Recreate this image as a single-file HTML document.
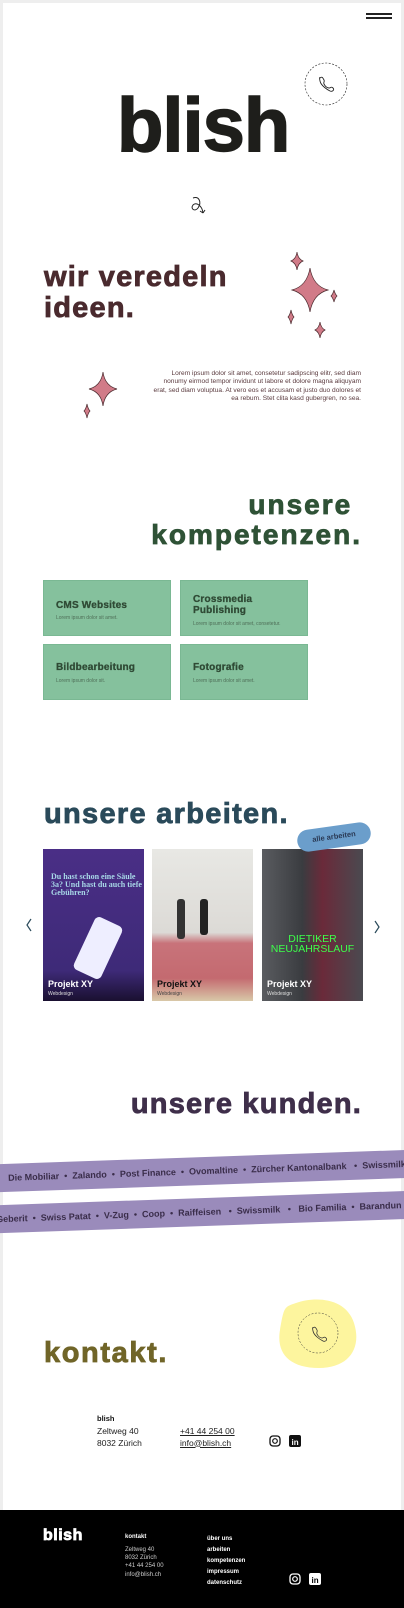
<!DOCTYPE html>
<html><head><meta charset="utf-8">
<style>
*{margin:0;padding:0;box-sizing:border-box}
body{width:404px;height:1608px;position:relative;background:#fff;font-family:"Liberation Sans",sans-serif;overflow:hidden}
.a{position:absolute}
.frame{left:0;top:0;width:404px;height:1510px;border:3px solid #eee;border-bottom:none}
.h{font-weight:bold;line-height:1;-webkit-text-stroke:0.8px currentColor}
.card{background:#85c19d;width:128px;height:56px;border:1px solid #7ab893}
.card b{position:absolute;left:12px;font-size:10px;color:#2f4a35;line-height:11px;-webkit-text-stroke:0.3px #2f4a35;letter-spacing:0.2px}
.card span{position:absolute;left:12px;font-size:5px;color:#4f6f58}
.proj{width:101px;height:152px;overflow:hidden}
.proj b{position:absolute;left:5px;bottom:12px;font-size:9px;color:#fff}
.proj i{position:absolute;left:5px;bottom:4px;font-size:5px;color:#ddd;font-style:normal}
.band{left:-20px;width:450px;height:28px;background:#9a8bbb;font-weight:bold;font-size:9px;color:#3a2d4a;white-space:nowrap;line-height:28px;padding-left:28px}
.f{color:#fff}
</style></head><body>
<div class="a frame"></div>
<div class="a" style="left:366px;top:13px;width:26px;height:2px;background:#222"></div>
<div class="a" style="left:366px;top:17px;width:26px;height:2px;background:#222"></div>
<svg class="a" style="left:300px;top:58px" width="52" height="52" viewBox="0 0 52 52">
<circle cx="26" cy="26" r="21" fill="none" stroke="#222" stroke-width="0.6" stroke-dasharray="2 1.5"/>
<path d="M20 20c2-2 3 0 4 2s-1 2 0 4 3 4 5 4 2-2 4 0-1 4-3 3-9-5-10-10 0-3 0-3z" fill="none" stroke="#222" stroke-width="0.9"/>
</svg>
<div class="a h" style="left:117px;top:88px;font-size:76px;color:#1e1e1b;letter-spacing:-1px;-webkit-text-stroke:1.5px #1e1e1b">blish</div>
<svg class="a" style="left:188px;top:193px" width="24" height="30" viewBox="0 0 24 30">
<path d="M5 5c6-2 9 4 5 10-3 4-8 1-5-3 3-3 9 0 10 8m0 0l-3-2m3 2l2-3" fill="none" stroke="#222" stroke-width="1"/>
</svg>
<div class="a h" style="left:44px;top:262px;font-size:29px;letter-spacing:1.2px;color:#4a2a2e;line-height:31px">wir veredeln<br>ideen.</div>
<svg class="a" style="left:0;top:240px" width="404" height="180" viewBox="0 240 404 180">
<g fill="#d17b88" stroke="#4a2a2e" stroke-width="0.7">
<path d="M310 268q3 18 18 22q-15 4-18 22q-3-18-18-22q15-4 18-22z"/>
<path d="M297 252q1 7 6 9q-5 2-6 9q-1-7-6-9q5-2 6-9z"/>
<path d="M334 290q1 4 3 6q-2 2-3 6q-1-4-3-6q2-2 3-6z"/>
<path d="M291 310q1 5 3 7q-2 2-3 7q-1-5-3-7q2-2 3-7z"/>
<path d="M320 322q1 6 5 8q-4 2-5 8q-1-6-5-8q4-2 5-8z"/>
<path d="M103 372q2 14 14 17q-12 3-14 17q-2-14-14-17q12-3 14-17z"/>
<path d="M87 404q1 5 3 7q-2 2-3 7q-1-5-3-7q2-2 3-7z"/>
</g></svg>
<div class="a" style="left:150px;top:370px;width:211px;text-align:right;font-size:6.6px;line-height:8.4px;color:#5a3a3e">Lorem ipsum dolor sit amet, consetetur sadipscing elitr, sed diam nonumy eirmod tempor invidunt ut labore et dolore magna aliquyam erat, sed diam voluptua. At vero eos et accusam et justo duo dolores et ea rebum. Stet clita kasd gubergren, no sea.</div>
<div class="a h" style="right:42px;top:490px;font-size:28px;letter-spacing:2px;color:#2f5236;text-align:right;line-height:30px">unsere&nbsp;<br>kompetenzen.</div>
<div class="a card" style="left:43px;top:580px"><b style="top:19px">CMS Websites</b><span style="top:34px">Lorem ipsum dolor sit amet.</span></div>
<div class="a card" style="left:180px;top:580px"><b style="top:13px">Crossmedia<br>Publishing</b><span style="top:40px">Lorem ipsum dolor sit amet, consetetur.</span></div>
<div class="a card" style="left:43px;top:644px"><b style="top:17px">Bildbearbeitung</b><span style="top:33px">Lorem ipsum dolor sit.</span></div>
<div class="a card" style="left:180px;top:644px"><b style="top:17px">Fotografie</b><span style="top:33px">Lorem ipsum dolor sit amet.</span></div>
<div class="a h" style="left:44px;top:800px;font-size:29px;letter-spacing:1.3px;color:#2a4a5a">unsere arbeiten.</div>
<div class="a proj" style="left:43px;top:849px;background:linear-gradient(#4a2e86,#3e2a78 80%,#1a1030)">
<div class="a" style="left:8px;top:24px;font-family:'Liberation Serif',serif;font-weight:bold;font-size:8px;line-height:8px;color:#a8d8e8">Du hast schon eine Säule 3a? Und hast du auch tiefe Gebühren?</div>
<div class="a" style="left:40px;top:70px;width:30px;height:58px;background:#eef;border-radius:5px;transform:rotate(25deg)"></div>
<b>Projekt XY</b><i>Webdesign</i></div>
<div class="a proj" style="left:152px;top:849px;background:linear-gradient(#e8e8e4,#dcdad6 55%,#c8737a 62%,#c46a70 85%,#d8c8a8)">
<div class="a" style="left:25px;top:50px;width:8px;height:40px;background:#333;border-radius:3px"></div>
<div class="a" style="left:48px;top:50px;width:8px;height:36px;background:#222;border-radius:3px"></div>
<b style="color:#111">Projekt XY</b><i style="color:#444">Webdesign</i></div>
<div class="a proj" style="left:262px;top:849px;background:linear-gradient(90deg,#5a5c60,#3a3c40 40%,#6a2a3a 60%,#4a4a50)">
<div class="a" style="left:0;top:85px;width:101px;font-size:10.5px;line-height:10px;color:#3dff4a;text-align:center">DIETIKER<br>NEUJAHRSLAUF</div>
<b>Projekt XY</b><i>Webdesign</i></div>
<div class="a" style="left:297px;top:826px;width:74px;height:22px;border-radius:11px;background:#6b9ecb;transform:rotate(-8deg);font-weight:bold;font-size:7.5px;color:#2a3a55;text-align:center;line-height:22px">alle arbeiten</div>
<svg class="a" style="left:24px;top:917px" width="10" height="16"><path d="M7 2L3 8l4 6" fill="none" stroke="#2a4a5a" stroke-width="1.2"/></svg>
<svg class="a" style="left:372px;top:919px" width="10" height="16"><path d="M3 2l4 6-4 6" fill="none" stroke="#2a4a5a" stroke-width="1.2"/></svg>
<div class="a h" style="right:42px;top:1090px;font-size:29px;letter-spacing:1.2px;color:#3f2f4a">unsere kunden.</div>
<div class="a band" style="top:1157px;transform:rotate(-2deg)">Die Mobiliar &nbsp;•&nbsp; Zalando &nbsp;•&nbsp; Post Finance &nbsp;•&nbsp; Ovomaltine &nbsp;•&nbsp; Zürcher Kantonalbank &nbsp; •&nbsp; Swissmilk</div>
<div class="a band" style="top:1198px;transform:rotate(-2deg);padding-left:16px">Geberit &nbsp;•&nbsp; Swiss Patat &nbsp;•&nbsp; V-Zug &nbsp;•&nbsp; Coop &nbsp;•&nbsp; Raiffeisen &nbsp; •&nbsp; Swissmilk &nbsp; • &nbsp; Bio Familia &nbsp;•&nbsp; Barandun R</div>
<svg class="a" style="left:276px;top:1298px" width="84" height="72" viewBox="0 0 84 72">
<path d="M20 5C40-2 70 0 78 25s-5 45-35 45S0 55 4 32 8 9 20 5z" fill="#fdf59e"/>
<circle cx="42" cy="35" r="20" fill="none" stroke="#333" stroke-width="0.5" stroke-dasharray="2 1.5"/>
<path d="M37 30c2-2 3 0 4 2s-1 2 0 4 3 4 5 4 2-2 4 0-1 4-3 3-9-5-10-10 0-3 0-3z" fill="none" stroke="#333" stroke-width="0.8"/>
</svg>
<div class="a h" style="left:44px;top:1339px;font-size:29px;letter-spacing:1.6px;color:#706528">kontakt.</div>
<div class="a" style="left:97px;top:1414px;font-size:7.5px;font-weight:bold;color:#111">blish</div>
<div class="a" style="left:97px;top:1426px;font-size:8.5px;line-height:11.5px;color:#222">Zeltweg 40<br>8032 Zürich</div>
<div class="a" style="left:180px;top:1426px;font-size:8.5px;line-height:11.5px;color:#222;text-decoration:underline">+41 44 254 00<br>info@blish.ch</div>
<svg class="a" style="left:269px;top:1435px" width="32" height="13"><rect x="1" y="1" width="10" height="10" rx="3" fill="none" stroke="#111" stroke-width="1.3"/><circle cx="6" cy="6" r="2.3" fill="none" stroke="#111" stroke-width="1.2"/><rect x="20" y="0" width="12" height="12" rx="2" fill="#111"/><text x="22.5" y="10" font-size="8" font-weight="bold" fill="#fff" font-family="Liberation Sans">in</text></svg>
<div class="a" style="left:0;top:1510px;width:404px;height:98px;background:#000"></div>
<div class="a f h" style="left:43px;top:1528px;font-size:16px;letter-spacing:0.5px">blish</div>
<div class="a f" style="left:125px;top:1534px;font-size:6px;font-weight:bold">kontakt</div>
<div class="a f" style="left:125px;top:1546px;font-size:6px;line-height:8.2px;color:#ccc">Zeltweg 40<br>8032 Zürich<br>+41 44 254 00<br>info@blish.ch</div>
<div class="a f" style="left:207px;top:1534px;font-size:6px;font-weight:bold;line-height:11px">über uns<br>arbeiten<br>kompetenzen<br>impressum<br>datenschutz</div>
<svg class="a" style="left:289px;top:1573px" width="32" height="13"><rect x="1" y="1" width="10" height="10" rx="3" fill="none" stroke="#fff" stroke-width="1.3"/><circle cx="6" cy="6" r="2.3" fill="none" stroke="#fff" stroke-width="1.2"/><rect x="20" y="0" width="12" height="12" rx="2" fill="#fff"/><text x="22.5" y="10" font-size="8" font-weight="bold" fill="#000" font-family="Liberation Sans">in</text></svg>
</body></html>
